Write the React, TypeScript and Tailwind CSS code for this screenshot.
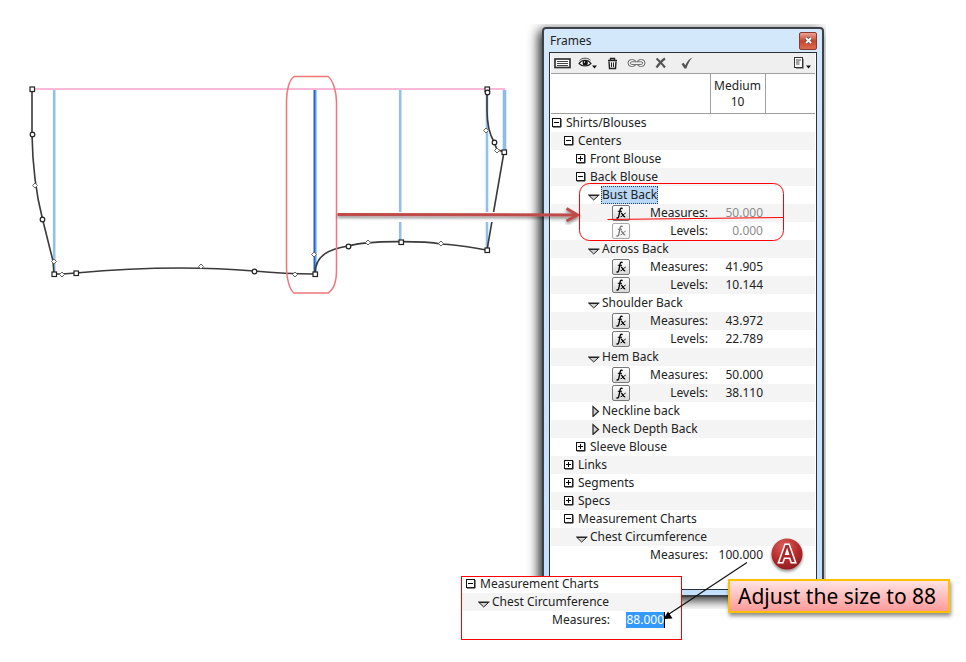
import type { ReactNode } from "react";

type NodeIcon = "minus" | "plus" | "down" | "right";

type TreeRow =
  | {
      kind: "node";
      level: number;
      icon: NodeIcon;
      label: string;
      selected?: boolean;
    }
  | {
      kind: "value";
      label: string;
      value: string;
      fx?: boolean;
      fxDisabled?: boolean;
      dimmed?: boolean;
    };

const LEVEL_PADDING = ["pl-px", "pl-[13px]", "pl-[25px]", "pl-[37px]"];

const rows: TreeRow[] = [
  { kind: "node", level: 0, icon: "minus", label: "Shirts/Blouses" },
  { kind: "node", level: 1, icon: "minus", label: "Centers" },
  { kind: "node", level: 2, icon: "plus", label: "Front Blouse" },
  { kind: "node", level: 2, icon: "minus", label: "Back Blouse" },
  { kind: "node", level: 3, icon: "down", label: "Bust Back", selected: true },
  { kind: "value", label: "Measures:", value: "50.000", fx: true, dimmed: true },
  {
    kind: "value",
    label: "Levels:",
    value: "0.000",
    fx: true,
    fxDisabled: true,
    dimmed: true,
  },
  { kind: "node", level: 3, icon: "down", label: "Across Back" },
  { kind: "value", label: "Measures:", value: "41.905", fx: true },
  { kind: "value", label: "Levels:", value: "10.144", fx: true },
  { kind: "node", level: 3, icon: "down", label: "Shoulder Back" },
  { kind: "value", label: "Measures:", value: "43.972", fx: true },
  { kind: "value", label: "Levels:", value: "22.789", fx: true },
  { kind: "node", level: 3, icon: "down", label: "Hem Back" },
  { kind: "value", label: "Measures:", value: "50.000", fx: true },
  { kind: "value", label: "Levels:", value: "38.110", fx: true },
  { kind: "node", level: 3, icon: "right", label: "Neckline back" },
  { kind: "node", level: 3, icon: "right", label: "Neck Depth Back" },
  { kind: "node", level: 2, icon: "plus", label: "Sleeve Blouse" },
  { kind: "node", level: 1, icon: "plus", label: "Links" },
  { kind: "node", level: 1, icon: "plus", label: "Segments" },
  { kind: "node", level: 1, icon: "plus", label: "Specs" },
  { kind: "node", level: 1, icon: "minus", label: "Measurement Charts" },
  { kind: "node", level: 2, icon: "down", label: "Chest Circumference" },
  { kind: "value", label: "Measures:", value: "100.000" },
];

function ToggleIcon({ icon }: { icon: NodeIcon }) {
  if (icon === "down") {
    return (
      <svg width="12" height="12" viewBox="0 0 12 12" className="block">
        <path d="M1 6.500H10.500L5.700 11Z" fill="#d0d0d0" stroke="#222" />
        <path d="M0 6H11.500" stroke="#222" />
      </svg>
    );
  }
  if (icon === "right") {
    return (
      <svg width="12" height="12" viewBox="0 0 12 12" className="block">
        <path d="M5 1.500V11.500L10.500 6.500Z" fill="#d0d0d0" stroke="#222" strokeWidth="1.200" />
      </svg>
    );
  }
  return (
    <svg width="12" height="12" viewBox="0 0 12 12" className="block">
      <rect x="0.500" y="1.500" width="9" height="9" fill="#bbb" />
      <rect x="0.500" y="1.500" width="8" height="8" fill="#fff" stroke="#111" />
      <path d="M9 2V10H1" fill="none" stroke="#333" />
      <path d="M2 5.500H7" stroke="#000" />
      {icon === "plus" && <path d="M4.500 3V8" stroke="#000" />}
    </svg>
  );
}

function NodeLabel({
  icon,
  label,
  selected,
}: {
  icon: NodeIcon;
  label: string;
  selected?: boolean;
}) {
  return (
    <button type="button" className="flex h-[18px] items-center">
      <span className="w-[14px] shrink-0">
        <ToggleIcon icon={icon} />
      </span>
      <span
        className={
          selected
            ? "-mx-px border border-dotted border-[#23415f] bg-[#b9d8f8] leading-4"
            : "leading-4"
        }
      >
        {label}
      </span>
    </button>
  );
}

function FxButton({ disabled }: { disabled?: boolean }) {
  return (
    <button
      type="button"
      aria-label="Formula"
      disabled={disabled}
      className="flex h-4 w-[18px] items-center justify-center rounded-[2px] border border-[#777] bg-gradient-to-b from-white to-[#d9d9d9] text-black disabled:border-[#aaa] disabled:to-[#f4f4f4] disabled:text-[#777]"
    >
      <svg width="12" height="12" viewBox="0 0 12 12" fill="none" stroke="currentColor">
        <path d="M7.6 1.6C6.2 .6 5.4 1.6 5.1 3L3.8 9.3C3.5 10.8 2.6 11.4 1.4 10.7" strokeWidth="1.3" />
        <path d="M2.8 4.3H7" />
        <path d="M6 6.3C7.6 5.6 7.8 10.4 10.2 9.6" strokeWidth="1.4" />
        <path d="M10.6 6.2C9 6 7.8 9.9 5.6 9.7" />
      </svg>
    </button>
  );
}

function ToolButton({
  label,
  className = "",
  children,
}: {
  label: string;
  className?: string;
  children: ReactNode;
}) {
  return (
    <button type="button" aria-label={label} className={className}>
      {children}
    </button>
  );
}

function Toolbar() {
  return (
    <div className="flex h-5 items-center bg-[#efefef] pr-1 pl-[3px]">
      <ToolButton label="List">
        <svg width="17" height="12" viewBox="0 0 17 12" fill="none">
          <rect x="1" y="2" width="15" height="8.500" fill="#fff" stroke="#333" strokeWidth="1.700" />
          <path d="M3 4.500H14M3 6.500H14M3 8.500H14" stroke="#444" strokeWidth="1.200" />
        </svg>
      </ToolButton>
      <ToolButton label="Visibility" className="ml-[7px]">
        <svg width="20" height="14" viewBox="0 0 20 14" fill="none">
          <path d="M1 7.5C3.5 3.5 10 3 13 7.5C10 10.8 4 10.8 1 7.5Z" fill="#fff" stroke="#222" strokeWidth="1.2" />
          <path d="M1.5 4.5C4 1.5 9.5 1.5 12.5 4.2" stroke="#444" />
          <circle cx="7.2" cy="6.9" r="2.6" fill="#111" />
          <circle cx="6.5" cy="6" r=".7" fill="#fff" />
          <path d="M14 9.5H19L16.5 12.5Z" fill="#111" />
        </svg>
      </ToolButton>
      <ToolButton label="Delete" className="ml-[9px]">
        <svg width="11" height="13" viewBox="0 0 11 13" fill="none" stroke="#222">
          <path d="M1 3.5H10M3.5 3V1.5H7.5V3" strokeWidth="1.4" />
          <path d="M2 4.5L2.5 11.5H8.5L9 4.5" strokeWidth="1.4" />
          <path d="M4.5 5.5V10M6.5 5.5V10" />
        </svg>
      </ToolButton>
      <ToolButton label="Link" className="ml-[9px]">
        <svg width="19" height="12" viewBox="0 0 19 12" fill="none" stroke="#666">
          <rect x="1" y="2.5" width="8" height="7" rx="3.5" />
          <rect x="10" y="2.5" width="8" height="7" rx="3.5" />
          <rect x="3.5" y="4.8" width="12" height="2.6" rx="1.2" fill="#fff" />
        </svg>
      </ToolButton>
      <ToolButton label="Cancel" className="ml-[9px]">
        <svg width="12" height="12" viewBox="0 0 12 12" fill="none" stroke="#555" strokeWidth="2.2">
          <path d="M1.5 1.5C4 3.5 7.5 7.5 10 10.5M10 1.5C7 3.5 4 7 1.5 10.5" />
        </svg>
      </ToolButton>
      <ToolButton label="Apply" className="ml-[14px]">
        <svg width="12" height="12" viewBox="0 0 12 12" fill="#555">
          <path d="M0.5 7L2.5 5.8L4.3 8.2C6 4.5 8 2 11.5 .5C8.5 3.5 7 7 5.4 11.6H3.4Z" />
        </svg>
      </ToolButton>
      <ToolButton label="Options" className="ml-auto">
        <svg width="18" height="14" viewBox="0 0 18 14" fill="none">
          <rect x="1.5" y="1.5" width="8" height="10" fill="#fff" stroke="#333" />
          <path d="M3 4H8M3 6H6.5M3 8H6.5" stroke="#444" />
          <path d="M10.5 3V12.5H3" stroke="#999" />
          <path d="M13 9.5H18L15.5 12.5Z" fill="#111" />
        </svg>
      </ToolButton>
    </div>
  );
}

function FramesTable() {
  return (
    <table className="w-full table-fixed border-collapse">
      <colgroup>
        <col className="w-[159px]" />
        <col className="w-[55px]" />
        <col />
      </colgroup>
      <thead>
        <tr className="h-10 border-y border-[#a0a0a0]">
          <th aria-label="Name" />
          <th className="border-x border-[#a0a0a0] font-normal leading-4">
            Medium
            <br />
            10
          </th>
          <th aria-label="More sizes" />
        </tr>
      </thead>
      <tbody>
        {rows.map((row, i) => (
          <tr key={i} className="h-[18px] even:bg-[#f4f4f4]">
            {row.kind === "node" ? (
              <td colSpan={3} className={`p-0 ${LEVEL_PADDING[row.level]}`}>
                <NodeLabel
                  icon={row.icon}
                  label={row.label}
                  selected={row.selected}
                />
              </td>
            ) : (
              <>
                <td className="p-0">
                  <div className="flex h-[18px] items-center pr-0.5 pl-[61px]">
                    {row.fx && <FxButton disabled={row.fxDisabled} />}
                    <span className="ml-auto">{row.label}</span>
                  </div>
                </td>
                <td
                  className={`p-0 pr-0.5 text-right leading-4 ${
                    row.dimmed ? "text-[#8c8c8c]" : ""
                  }`}
                >
                  {row.value}
                </td>
                <td />
              </>
            )}
          </tr>
        ))}
      </tbody>
    </table>
  );
}

function FramesWindow() {
  return (
    <section className="w-[282px] rounded-t-sm border-2 border-[#3c4148] bg-gradient-to-b from-[#d4e8fb] to-[#c3e0fc] px-[5px] pb-[5px] shadow-[-3px_3px_12px_rgba(0,0,0,0.9)]">
      <header className="flex h-[23px] items-center justify-between">
        <h1 className="pl-px">Frames</h1>
        <button
          type="button"
          aria-label="Close"
          className="flex h-[18px] w-[18px] items-center justify-center rounded-[2px] border border-[#8a3a30] bg-gradient-to-b from-[#e9a393] via-[#c8432b] to-[#dc6a4e]"
        >
          <svg width="9" height="9" viewBox="0 0 9 9" fill="none">
            <path d="M2 2L7 7M7 2L2 7" stroke="#555" strokeWidth="3.4" />
            <path d="M2 2L7 7M7 2L2 7" stroke="#fff" strokeWidth="1.8" />
          </svg>
        </button>
      </header>
      <div className="border border-[#2b3036] bg-white px-px pb-[25px]">
        <Toolbar />
        <FramesTable />
      </div>
    </section>
  );
}

// Handles on the outline: squares are corners, circles curve points,
// diamonds the small control points.
const squares = [
  [32, 89], [54, 274], [76, 273], [315, 274], [401, 242], [487, 250],
  [504, 152], [487, 89],
];
const circles = [
  [32, 134], [42, 219], [254, 271], [348, 246], [487, 92], [494, 142],
];
const diamonds = [
  [35, 185], [54, 261], [62, 274], [201, 266], [295, 274], [314, 254],
  [368, 242], [441, 243], [486, 130], [497, 150],
];

function PatternDrawing() {
  return (
    <svg
      viewBox="0 0 526 320"
      className="block w-[526px] shrink-0"
      fill="none"
      role="img"
      aria-label="Blouse back pattern"
    >
      <path d="M32 89H505" stroke="#fbb9d9" strokeWidth="2" />
      <path d="M54.200 90V274M400.200 90V242M487 90V250" stroke="#93bfee" strokeWidth="2.600" />
      <path d="M504.500 90V152" stroke="#8dbbea" strokeWidth="3.600" />
      <path d="M315.500 90V274" stroke="#a9cbf0" strokeWidth="3" />
      <path d="M314.500 90V274" stroke="#1c66c4" strokeWidth="2" />
      <g stroke="#3a3a3a" strokeWidth="1.6">
        <path d="M32 89V134C32.500 165 36 194 42.500 219L53 261L54 274H62L76 273C130 268 196 266 254 271C275 273 290 274 315 274" />
        <path d="M315 274C315 254 331 249 348 246C370 240 425 241 441 244C460 245 474 248 487 250L504 152L497 149.500L494 142C490 135 487 127 487 110V92" />
      </g>
      {/* gap in the outline where the arrow passes */}
      <path d="M392 217H505" stroke="#fff" strokeWidth="10" />
      <g fill="#fff" stroke="#222" strokeWidth="1.2">
        {squares.map(([x, y]) => (
          <rect key={`${x}-${y}`} x={x - 2} y={y - 2} width="4.500" height="4.500" />
        ))}
        {circles.map(([x, y]) => (
          <circle key={`${x}-${y}`} cx={x + 0.5} cy={y + 0.5} r="2.300" />
        ))}
      </g>
      <g fill="#fff" stroke="#666">
        {diamonds.map(([x, y]) => (
          <path key={`${x}-${y}`} d={`M${x} ${y - 2}l2.500 2.500l-2.500 2.500l-2.500 -2.500Z`} />
        ))}
      </g>
    </svg>
  );
}

function Annotations() {
  return (
    <svg
      width="966"
      height="662"
      viewBox="0 0 966 662"
      fill="none"
      className="pointer-events-none absolute top-0 left-0"
    >
      <defs>
        <radialGradient id="badge" cx="0.4" cy="0.25" r="0.8">
          <stop offset="0" stopColor="#d9605c" />
          <stop offset="0.55" stopColor="#b92d2d" />
          <stop offset="1" stopColor="#8b1a1c" />
        </radialGradient>
        <filter id="soft" x="-20%" y="-20%" width="140%" height="150%">
          <feDropShadow dx="0" dy="2" stdDeviation="1.500" floodOpacity="0.45" />
        </filter>
      </defs>

      <path
        d="M294 76.500H328C333 80 336.500 92 336.500 102V270C336.500 282 333 290 328 293H294C290 290 286.500 280 286.500 268V101C286.500 91 289 80 294 76.500Z"
        stroke="#f0767a"
        strokeWidth="1.500"
      />
      <g stroke="#be4b48" filter="url(#soft)">
        <path d="M337.500 214.500L577 215" strokeWidth="3" />
        <path d="M566.500 208.500L577.500 215L566.500 221" strokeWidth="3" />
      </g>

      <rect x="579.500" y="183.500" width="204" height="57" rx="10" stroke="#f00" />
      <path d="M607.500 219.500L783 217.500" stroke="#f00" />

      <path d="M747 562.500L669 614" stroke="#111" strokeWidth="1.200" />
      <path d="M663.500 619L668 611.500L672.500 618.500Z" fill="#000" />

      <g filter="url(#soft)">
        <circle cx="787" cy="554" r="15.500" fill="url(#badge)" />
        <text
          x="787"
          y="562"
          textAnchor="middle"
          className="font-['Open_Sans',sans-serif] text-[23px] font-semibold"
          fill="#a82426"
          stroke="#fff"
          strokeWidth="3"
          paintOrder="stroke"
        >
          A
        </text>
      </g>
    </svg>
  );
}

function ChartInset() {
  return (
    <div className="absolute top-[576px] left-[461px] w-[221px] border border-[#f00] bg-white pb-2.5">
      <div className="-mt-0.5 pl-1">
        <NodeLabel icon="minus" label="Measurement Charts" />
      </div>
      <div className="bg-[#f4f4f4] pl-4">
        <NodeLabel icon="down" label="Chest Circumference" />
      </div>
      <div className="flex h-[18px] items-center justify-end gap-4 pr-4">
        <label htmlFor="chest">Measures:</label>
        <input
          id="chest"
          defaultValue="88.000"
          className="h-4 w-[39px] border-r border-black bg-[#3399ff] p-0 text-right text-white"
        />
      </div>
    </div>
  );
}

export default function App() {
  return (
    <main className="relative min-h-screen overflow-hidden bg-white font-['Noto_Sans','Open_Sans',sans-serif] text-[12px] leading-4 text-[#222]">
      <div className="flex items-start">
        <PatternDrawing />
        <div className="mt-6 shrink-0 overflow-hidden pt-[3px] pr-0.5 pb-3 pl-4">
          <FramesWindow />
        </div>
      </div>
      <ChartInset />
      <p className="absolute top-[579px] left-[728px] border-2 border-[#ffc000] bg-gradient-to-b from-[#ffe3e3] to-[#ff9a9a] pr-3 pl-2 text-[21px] leading-[30px] whitespace-nowrap text-black shadow-[1px_3px_4px_rgba(0,0,0,0.45)]">
        Adjust the size to 88
      </p>
      <Annotations />
    </main>
  );
}
